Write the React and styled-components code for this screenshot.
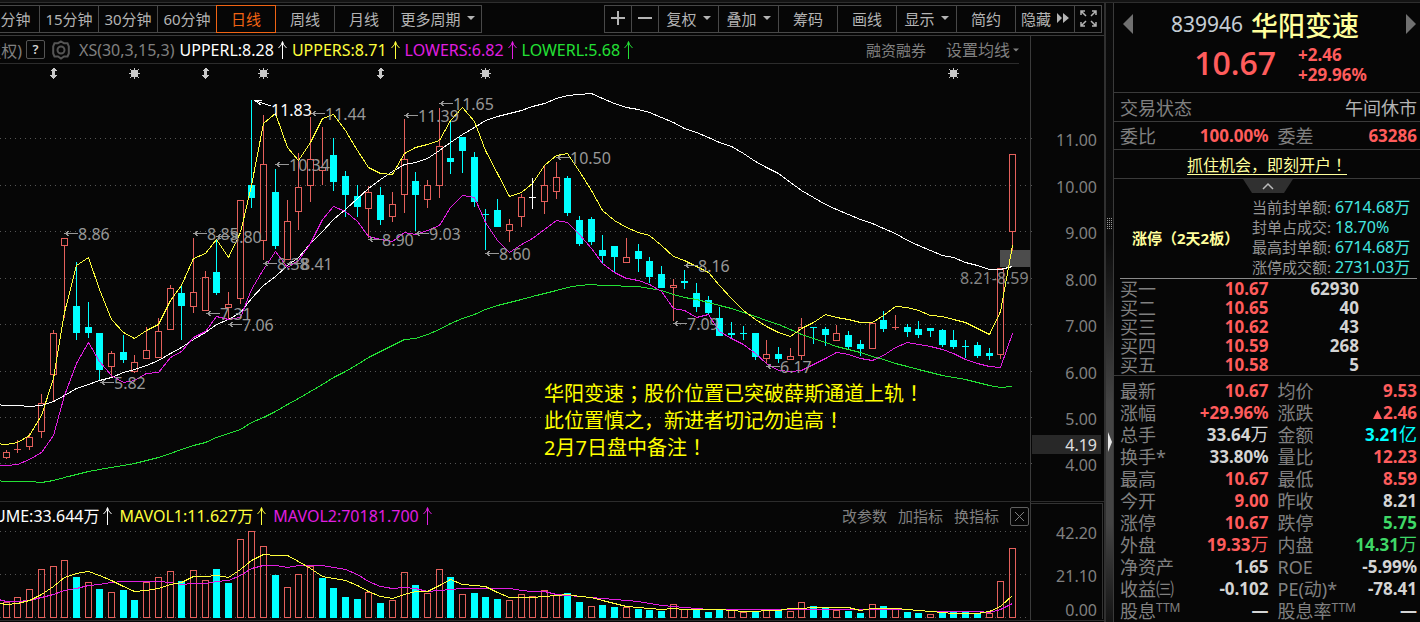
import React from "react";
import styled, { createGlobalStyle } from "styled-components";

const C = {
  bg: "#060606",
  line: "#3a3a3a",
  dim: "#808080",
  text: "#b4b4b4",
  bright: "#d4d4d4",
  red: "#ff5c5c",
  candle: "#e4605c",
  cyan: "#00ffff",
  teal: "#45e6e0",
  green: "#3fd867",
  lime: "#23e035",
  yellow: "#ffff3c",
  pale: "#ffff9c",
  magenta: "#e01ee0",
  orange: "#f06414",
};

const Global = createGlobalStyle`
  * { box-sizing: border-box; }
  body {
    margin: 0;
    background: ${C.bg};
    color: ${C.text};
    font-family: "Noto Sans", "Noto Sans CJK SC", sans-serif;
    font-size: 15px;
    overflow: hidden;
  }
  button {
    font: inherit;
    color: inherit;
    background: none;
    border: 0;
    padding: 0;
    cursor: pointer;
  }
  svg { display: block; flex: none; }
`;

/* ---------- page frame ---------- */
const Page = styled.div`
  border-top: 2px solid #141414;
`;
const Frame = styled.div`
  display: flex;
  border-top: 1px solid #2e2e2e;
`;
const ChartSide = styled.main`
  flex: 1;
  min-width: 0;
`;
const Splitter = styled.div`
  width: 9px;
  border-left: 2px solid #303030;
  display: flex;
  flex-direction: column;
  align-items: center;
  padding-top: 215px;
  gap: 203px;
  background: linear-gradient(#0a0a0a 0, #0c0c0c 240px, #444 400px, #444 520px, #141414 100%);
`;

/* ---------- toolbar ---------- */
const Toolbar = styled.nav`
  display: flex;
  justify-content: space-between;
  height: 33px;
  padding: 2px 2px 0 0;
  border-bottom: 1px solid ${C.line};
`;
const ToolGroup = styled.div`
  display: flex;
`;
const ToolButton = styled.button`
  display: flex;
  align-items: center;
  justify-content: center;
  gap: 6px;
  width: ${(p) => p.$w || 60}px;
  height: 28px;
  white-space: nowrap;
  border: 1px solid ${(p) => (p.$on ? C.orange : "#484848")};
  border-left-width: ${(p) => (p.$cut ? 0 : 1)}px;
  color: ${(p) => (p.$on ? C.orange : C.text)};
  position: relative;
  z-index: ${(p) => (p.$on ? 1 : 0)};
  padding: 0 ${(p) => (p.$cut ? 8 : 0)}px 2px 0;
  & + & { margin-left: -1px; }
`;

const Caret = ({ w = 8 }) => (
  <svg width={w} height="4" viewBox="0 0 8 4" aria-hidden="true">
    <path d="M0 0H8L4 4Z" fill="currentColor" />
  </svg>
);
const Plus = () => (
  <svg width="14" height="14" viewBox="0 0 14 14" stroke="currentColor" strokeWidth="2">
    <path d="M0 7H14M7 0V14" />
  </svg>
);
const Minus = () => (
  <svg width="14" height="14" viewBox="0 0 14 14" stroke="currentColor" strokeWidth="2">
    <path d="M0 7H14" />
  </svg>
);
const FastForward = () => (
  <svg width="12" height="10" viewBox="0 0 12 10" fill="currentColor">
    <path d="M0 0L5 5L0 10ZM6 0L12 5L6 10Z" />
  </svg>
);
const Expand = () => (
  <svg width="17" height="17" viewBox="0 0 17 17" fill="none" stroke="currentColor" strokeWidth="1.5">
    <path d="M1 5V1H5M1 1L6 6M12 1H16V5M16 1L11 6M1 12V16H5M1 16L6 11M12 16H16V12M16 16L11 11" />
  </svg>
);
const UpArrow = () => (
  <svg width="10" height="18" viewBox="0 0 10 18" fill="none" stroke="currentColor">
    <path d="M5.5 18V1M1.5 7Q5 4 5.5 0.5Q6 4 9.5 7" />
  </svg>
);

/* ---------- plot area ---------- */
const PlotRow = styled.section`
  display: flex;
  border-bottom: 1px solid #2c2c2c;
`;
const PlotColumn = styled.div`
  flex: 1;
  min-width: 0;
`;
const AxisColumn = styled.div`
  width: 74px;
  border-left: 1px solid ${C.line};
  padding-top: ${(p) => p.$top}px;
`;
const Indicators = styled.header`
  display: flex;
  align-items: center;
  justify-content: space-between;
  height: 28px;
  margin-right: 11px;
  border-bottom: 1px solid #2c2c2c;
`;
const VolumeHeader = styled(Indicators)`
  margin: 0 1px 0 -6px;
  border-bottom: 0;
`;
const Readings = styled.div`
  display: flex;
  align-items: center;
  white-space: nowrap;
`;
const ClippedName = styled.span`
  display: flex;
  justify-content: flex-end;
  width: 22px;
  overflow: hidden;
  font-size: 16px;
  color: ${C.dim};
`;
const HelpButton = styled.button`
  width: 19px;
  height: 19px;
  margin-left: 4px;
  border: 1px solid #555;
  border-radius: 2px;
  font-size: 13px;
  line-height: 17px;
  font-weight: 600;
  color: ${C.bright};
`;
const GearButton = styled.button`
  margin: 0 9px 0 7px;
  color: #555;
`;
const Reading = styled.span`
  display: flex;
  align-items: center;
  gap: 3px;
  margin-right: ${(p) => p.$gap || 5}px;
  font-size: 16px;
  line-height: 22px;
  color: ${(p) => p.$c};
`;
const Actions = styled.div`
  display: flex;
  align-items: center;
  gap: ${(p) => p.$gap}px;
  color: ${C.dim};
  white-space: nowrap;
`;
const TextButton = styled.button`
  display: flex;
  align-items: center;
  gap: 3px;
  font-size: ${(p) => (p.$large ? 16 : 15)}px;
  line-height: 22px;
`;
const CloseButton = styled.button`
  display: grid;
  place-items: center;
  width: 19px;
  height: 19px;
  border: 1px solid #606060;
  border-radius: 2px;
`;
const Plot = styled.svg`
  width: 100%;
  height: ${(p) => p.$h}px;
  shape-rendering: crispEdges;
`;
const AxisSvg = styled.svg`
  shape-rendering: crispEdges;
`;

/* full-width marks set in the middle of their cell */
const MidTspan = styled.tspan`
  font-family: "Noto Sans CJK TC", sans-serif;
`;
const MidSpan = styled.span`
  font-family: "Noto Sans CJK TC", sans-serif;
`;
const Marks = ({ t, as: Mark = MidSpan }) =>
  t.split(/([；！])/).map((s, i) => (i % 2 ? <Mark key={i}>{s}</Mark> : s));

const STEP = 11.7;
const slot = (i) => Math.floor(6.25 + STEP * i);

/* kind, high, body top, body bottom, low */
const candles = [
  ["r", 450, 452, 457, 458], ["r", 440, 449, 450, 452], ["r", 433, 437, 446, 449], ["r", 394, 403, 431, 437],
  ["r", 330, 333, 374, 401], ["r", 238, 238, 245, 317], ["c", 262, 306, 333, 339], ["c", 302, 327, 333, 337],
  ["c", 333, 333, 370, 379], ["r", 351, 353, 366, 377], ["c", 335, 352, 360, 362], ["r", 355, 362, 371, 372],
  ["r", 327, 350, 358, 358], ["r", 318, 331, 357, 357], ["r", 285, 288, 329, 329], ["c", 284, 293, 306, 339],
  ["r", 238, 292, 306, 312], ["r", 271, 277, 310, 310], ["c", 240, 272, 293, 294], ["r", 292, 304, 307, 319],
  ["r", 200, 200, 298, 303], ["c", 100, 185, 198, 207], ["r", 115, 164, 240, 259], ["c", 169, 192, 246, 248],
  ["r", 200, 221, 259, 259], ["r", 153, 187, 211, 229], ["r", 117, 159, 185, 201], ["r", 127, 167, 170, 184],
  ["c", 138, 155, 182, 190], ["c", 171, 176, 195, 216], ["c", 185, 196, 207, 216], ["r", 186, 192, 208, 237],
  ["c", 187, 195, 220, 224], ["r", 192, 204, 216, 221], ["r", 119, 159, 194, 212], ["c", 172, 181, 195, 230],
  ["r", 180, 185, 199, 207], ["r", 108, 146, 185, 197], ["c", 120, 158, 162, 173], ["c", 137, 137, 151, 172],
  ["c", 152, 157, 202, 206], ["c", 209, 214, 215, 249], ["c", 199, 210, 227, 227], ["r", 219, 224, 230, 241],
  ["r", 194, 197, 216, 226], ["w", 178, 197, 198, 208], ["r", 165, 185, 201, 213], ["r", 162, 177, 191, 198],
  ["c", 176, 178, 213, 215], ["c", 216, 220, 244, 245], ["c", 217, 219, 242, 244], ["c", 235, 250, 256, 263],
  ["c", 246, 246, 257, 272], ["r", 238, 257, 262, 262], ["c", 244, 251, 259, 271], ["c", 257, 261, 277, 282],
  ["c", 266, 274, 288, 288], ["r", 279, 285, 287, 320], ["c", 270, 281, 283, 288], ["c", 283, 293, 307, 311],
  ["c", 296, 300, 313, 314], ["c", 307, 318, 336, 336], ["c", 322, 333, 335, 337], ["c", 326, 333, 334, 339],
  ["c", 333, 333, 357, 359], ["r", 340, 354, 358, 362], ["c", 347, 354, 359, 362], ["r", 348, 356, 359, 359],
  ["r", 318, 327, 355, 359], ["c", 327, 327, 328, 343], ["c", 327, 329, 335, 345], ["r", 325, 333, 340, 340],
  ["c", 331, 335, 347, 348], ["c", 340, 344, 349, 355], ["r", 323, 323, 348, 348], ["c", 311, 320, 329, 331],
  ["r", 315, 327, 328, 329], ["c", 324, 327, 332, 336], ["c", 321, 329, 335, 337], ["c", 328, 328, 331, 336],
  ["c", 329, 330, 345, 346], ["c", 330, 340, 347, 348], ["c", 340, 346, 347, 357], ["c", 342, 345, 356, 357],
  ["c", 348, 353, 356, 359], ["r", 268, 268, 354, 358], ["r", 154, 154, 231, 250],
];

const upperShort = [
  443, 444, 442, 435, 415, 378, 312, 265, 257, 289, 319, 332, 338, 330, 324, 300, 285, 258, 253, 239, 257, 232, 185,
  123, 113, 147, 160, 142, 118, 114, 130, 150, 167, 173, 174, 153, 147, 144, 140, 120, 107, 121, 150, 173, 196, 192,
  183, 165, 155, 153, 171, 190, 210, 220, 227, 232, 235, 245, 256, 260, 266, 272, 285, 298, 310, 319, 326, 332, 336,
  328, 322, 314, 317, 319, 322, 322, 315, 306, 307, 310, 315, 316, 319, 322, 328, 334, 311, 245,
];
const upperLong = [
  404, 405, 405, 406, 405, 401, 395, 388, 384, 380, 377, 372, 369, 365, 360, 353, 347, 339, 332, 324, 319, 312, 298,
  285, 276, 265, 257, 243, 231, 219, 209, 198, 188, 179, 171, 164, 162, 158, 150, 142, 134, 127, 120, 116, 113, 110,
  106, 103, 98, 95, 94, 93, 98, 103, 107, 109, 112, 117, 122, 128, 132, 137, 142, 146, 153, 161, 167, 173, 182, 190,
  197, 204, 209, 214, 219, 223, 228, 233, 240, 245, 250, 255, 257, 262, 265, 269, 269, 266,
];
const lowerShort = [
  465, 465, 464, 459, 452, 435, 395, 363, 342, 361, 375, 382, 380, 373, 372, 357, 351, 337, 331, 316, 319, 317, 289,
  269, 251, 267, 260, 243, 219, 206, 211, 221, 236, 239, 241, 232, 234, 230, 225, 207, 195, 197, 222, 240, 252, 244,
  238, 229, 220, 222, 234, 248, 263, 272, 278, 280, 284, 291, 308, 310, 317, 314, 331, 338, 344, 353, 363, 370, 371,
  370, 364, 358, 352, 354, 358, 360, 355, 347, 342, 344, 346, 349, 353, 359, 363, 366, 367, 333,
];
const lowerLong = [
  480, 481, 481, 481, 482, 480, 477, 474, 471, 469, 467, 465, 463, 460, 457, 453, 449, 445, 442, 437, 433, 429, 422,
  417, 411, 404, 398, 391, 384, 377, 371, 364, 357, 351, 345, 339, 338, 334, 329, 323, 318, 314, 309, 305, 302, 299,
  296, 293, 290, 287, 285, 284, 285, 285, 286, 286, 288, 290, 294, 297, 299, 302, 305, 308, 312, 316, 320, 324, 329,
  334, 338, 342, 346, 349, 352, 356, 359, 363, 366, 369, 372, 375, 377, 379, 382, 385, 387, 386,
];

const volumeTops = [
  602, 597, 589, 569, 566, 560, 577, 582, 589, 592, 590, 600, 582, 577, 571, 581, 570, 580, 569, 583, 539, 531, 546,
  575, 587, 574, 566, 578, 588, 597, 599, 592, 603, 600, 572, 585, 593, 569, 577, 594, 593, 597, 599, 600, 594, 596,
  590, 595, 593, 602, 606, 605, 607, 607, 609, 610, 611, 604, 609, 609, 612, 610, 610, 612, 612, 609, 611, 611, 602,
  606, 608, 610, 611, 613, 604, 606, 609, 612, 613, 614, 613, 612, 612, 613, 613, 581, 548,
];
const volumeKinds =
  "rrrrrrcrcrccrrrcrrccrrrcrrrccccrcrrcrrcrcccrrrrrccrccrcccrrcccrrcrcrrccrccrcrccrccccrrr";
const mavol1 = [
  602, 604, 603, 600, 594, 586, 577, 573, 571, 575, 580, 586, 591, 590, 588, 584, 582, 576, 576, 575, 577, 569, 560,
  554, 555, 555, 561, 568, 576, 578, 580, 585, 591, 596, 598, 594, 591, 591, 585, 579, 584, 585, 586, 592, 597, 597,
  597, 596, 595, 594, 596, 597, 600, 603, 606, 607, 608, 609, 608, 609, 609, 609, 609, 610, 611, 611, 610, 610, 608,
  608, 607, 607, 607, 607, 610, 608, 608, 608, 609, 610, 611, 612, 613, 613, 613, 611, 606, 595,
];
const mavol2 = [
  598, 601, 601, 600, 597, 594, 590, 588, 585, 584, 582, 581, 581, 581, 581, 582, 584, 583, 583, 581, 580, 575, 568,
  565, 565, 567, 565, 565, 565, 567, 569, 574, 581, 586, 588, 587, 588, 591, 590, 589, 588, 588, 588, 588, 588, 590,
  591, 591, 594, 595, 596, 597, 598, 599, 600, 601, 603, 605, 606, 607, 608, 609, 609, 609, 609, 609, 609, 609, 609,
  609, 609, 609, 609, 609, 609, 609, 609, 609, 609, 610, 611, 611, 611, 611, 611, 612, 609, 603,
];

/* each series begins one slot before the visible window */
const Line = ({ ys, color }) => (
  <polyline
    fill="none"
    stroke={color}
    points={ys.map((y, i) => `${slot(i - 1) + 0.5},${y + 0.5}`).join(" ")}
  />
);

const grid = [138, 185, 231, 278, 324, 371, 417, 463];
const Grid = ({ rows, from = 0, to = 1030 }) =>
  rows.map((y) => (
    <line key={y} x1={from} x2={to} y1={y + 0.5} y2={y + 0.5} stroke="#555" strokeDasharray="1 4" />
  ));

const peaks = [
  ["8.86", 64, 233], ["8.85", 193, 233], ["8.80", 216, 236], ["7.31", 206, 313], ["7.06", 228, 324],
  ["5.82", 100, 382], ["10.34", 275, 164], ["8.38", 263, 263], ["8.41", 287, 263], ["11.44", 311, 113],
  ["11.39", 404, 115], ["11.65", 439, 103], ["8.90", 368, 239], ["9.03", 415, 233], ["8.60", 485, 253],
  ["10.50", 556, 157], ["8.16", 684, 265], ["7.09", 673, 323], ["6.17", 766, 366],
];

const Candle = ({ i, d: [kind, hi, top, bottom, low] }) => {
  const x = slot(i);
  const color = { r: C.candle, c: C.cyan, w: "#fff" }[kind];
  const h = bottom - top;
  return (
    <g fill={color}>
      {hi < top && <rect x={x} y={hi} width="1" height={top - hi} />}
      {low > bottom && <rect x={x} y={bottom} width="1" height={low - bottom + 1} />}
      {kind === "r" && h > 1 ? (
        <rect x={x - 2.5} y={top + 0.5} width="6" height={h} fill="none" stroke={color} />
      ) : (
        <rect x={x - 3} y={top} width="7" height={Math.max(h, 1)} />
      )}
    </g>
  );
};

const Star = ({ x }) => (
  <g transform={`translate(${x} 73)`}>
    <rect x="-3" y="-3" width="7" height="7" fill="#c8c8c8" />
    <path
      d="M0.5-5V6M-5 0.5H6M-4-4L5 5M5-4L-4 5"
      fill="none"
      stroke="#c8c8c8"
      strokeWidth="1"
    />
  </g>
);
const Updown = ({ x }) => (
  <path
    transform={`translate(${x} 73)`}
    fill="#c8c8c8"
    d="M0-5H1L4-2H2V2H4L1 6H0L-3 2H-1V-2H-3Z"
  />
);

const note = ["华阳变速；股价位置已突破薛斯通道上轨！", "此位置慎之，新进者切记勿追高！", "2月7日盘中备注！"];

const PriceChart = () => (
  <Plot $h={437} viewBox="0 64 1030 437" preserveAspectRatio="xMaxYMin meet" role="img" aria-label="日线">
    <Grid rows={grid} />
    {[53, 205, 380].map((x) => <Updown key={x} x={x} />)}
    {[134, 263, 485, 953].map((x) => <Star key={x} x={x} />)}
    <rect x="1000" y="250" width="30" height="17" fill="#4c4c4c" />
    {candles.map((d, i) => <Candle key={i} i={i} d={d} />)}
    <Line ys={upperLong} color="#fff" />
    <Line ys={lowerLong} color={C.lime} />
    <Line ys={lowerShort} color={C.magenta} />
    <Line ys={upperShort} color={C.yellow} />
    <g fill="#989898" fontSize="16">
      {peaks.map(([label, x, y]) => (
        <g key={label}>
          <path d={`M${x + 14} ${y + 0.5}H${x + 1}M${x + 5} ${y - 2}L${x + 1} ${y + 0.5}L${x + 5} ${y + 3}`} fill="none" stroke="#989898" />
          <text x={x + 14} y={y + 7}>{label}</text>
        </g>
      ))}
      <text x="960" y="284" fill="#848484">8.21-8.59</text>
    </g>
    <path d="M271 106L256 101M262 100H254L261 105" fill="none" stroke="#fff" />
    <text x="271" y="116" fontSize="16" fill="#fff">11.83</text>
    <g fill="#ffff00" fontSize="20">
      {note.map((t, i) => (
        <text key={t} x="544" y={401 + i * 27}><Marks t={t} as={MidTspan} /></text>
      ))}
    </g>
  </Plot>
);

const VolumeChart = () => (
  <Plot $h={90} viewBox="0 530 1030 90" preserveAspectRatio="xMaxYMin meet" role="img" aria-label="VOLUME">
    <Grid rows={[531, 574, 617]} />
    {volumeTops.map((y, i) => {
      const x = slot(i);
      return volumeKinds[i] === "c" ? (
        <rect key={i} x={x - 3} y={y} width="7" height={618 - y} fill={C.cyan} />
      ) : (
        <rect key={i} x={x - 2.5} y={y + 0.5} width="6" height={617 - y} fill="none" stroke={C.candle} />
      );
    })}
    <Line ys={mavol2} color={C.magenta} />
    <Line ys={mavol1} color={C.yellow} />
  </Plot>
);

const PriceAxis = () => (
  <AxisSvg width="73" height="437" viewBox="1031 64 73 437">
    <rect x="1032" y="435" width="69" height="19" rx="1" fill="#282828" />
    <Grid rows={grid} from={1031} to={1034} />
    <g fill={C.dim} fontSize="16" textAnchor="end">
      {grid.map((y, i) => (
        <text key={y} x="1097" y={y + 8}>{(11 - i).toFixed(2)}</text>
      ))}
      <text x="1097" y="451" fill="#e0e0e0">4.19</text>
    </g>
  </AxisSvg>
);

const VolumeAxis = () => (
  <AxisSvg width="73" height="118" viewBox="1031 502 73 118">
    <path d="M1031 503H1102.5V619" fill="none" stroke="#333" />
    <g fill={C.dim} fontSize="16" textAnchor="end">
      <text x="1097" y="539">42.20</text>
      <text x="1097" y="582">21.10</text>
      <text x="1097" y="616">0.00</text>
    </g>
  </AxisSvg>
);

/* ---------- quote panel ---------- */
const QuotePanel = styled.aside`
  width: 307px;
  border-left: 1px solid ${C.line};
  white-space: nowrap;
`;
const QuoteHead = styled.header`
  display: flex;
  align-items: flex-start;
  justify-content: space-between;
  height: 90px;
  padding: 11px 4px 0 9px;
  border-bottom: 1px solid ${C.line};
  color: #707070;
`;
const QuoteCore = styled.div`
  display: flex;
  flex-direction: column;
  align-items: center;
  margin: -6px 9px 0 0;
`;
const StockTitle = styled.h1`
  display: flex;
  align-items: center;
  gap: 8px;
  height: 32px;
  margin: 0;
  font-size: 27px;
  font-weight: 500;
  color: ${C.pale};
`;
const Code = styled.span`
  font-size: 21px;
  font-weight: 400;
  color: #c4ccd4;
`;
const PriceLine = styled.div`
  display: flex;
  align-items: center;
  gap: 22px;
  height: 44px;
  padding-left: 31px;
  color: ${C.red};
`;
const Price = styled.strong`
  font: 600 32px "Open Sans", "Noto Sans", sans-serif;
`;
const Change = styled.div`
  font-size: 17px;
  font-weight: 700;
  line-height: 20px;
  padding-top: 6px;
`;
const StatusRow = styled.div`
  display: flex;
  align-items: center;
  justify-content: space-between;
  height: 29px;
  padding: 0 3px 0 6px;
  border-bottom: 1px solid ${C.line};
  font-size: 18px;
  color: ${C.dim};
`;
const StatusValue = styled.span`
  color: ${C.text};
`;
const PromoRow = styled.div`
  height: 29px;
  border-bottom: 1px solid ${C.line};
  text-align: center;
  line-height: 28px;
  font-size: 16px;
`;
const PromoLink = styled.a`
  color: ${C.pale};
  text-underline-offset: 3px;
`;
const FoldButton = styled.button`
  display: block;
  margin: 0 0 0 129px;
`;
const LimitBox = styled.section`
  display: flex;
  align-items: center;
  justify-content: space-between;
  margin: 0 3px 0 6px;
  padding: 4px 9px 1px 12px;
  border-bottom: 1px solid #8a8a8a;
`;
const LimitTitle = styled.strong`
  font-size: 15px;
  font-weight: 700;
  color: ${C.pale};
`;
const LimitList = styled.dl`
  display: grid;
  grid-template-columns: auto 73px;
  column-gap: 4px;
  margin: 0;
  line-height: 20px;
  color: #949494;
`;
const LimitValue = styled.dd`
  margin: 0;
  font-size: 16px;
  height: 20px;
  color: ${C.teal};
`;
const DataTable = styled.table`
  width: calc(100% - 9px);
  margin: ${(p) => p.$top || 0}px 3px 0 6px;
  border-collapse: collapse;
  table-layout: fixed;
  font-size: 17px;
`;
const Row = styled.tr`
  height: ${(p) => p.$h}px;
  line-height: 18px;
`;
const Label = styled.th`
  padding: 0 0 0 ${(p) => p.$pad || 0}px;
  text-align: left;
  font-size: 18px;
  font-weight: 400;
  color: ${C.dim};
  & sup { font-size: 12px; line-height: 0; vertical-align: 6px; }
`;
const Value = styled.td`
  padding: 0 ${(p) => p.$pad || 0}px 0 0;
  text-align: right;
  font-weight: 700;
  color: ${(p) => p.$c || C.bright};
`;
const Unit = styled.span`
  font-weight: 400;
  font-size: 18px;
  line-height: 0;
`;
const Divider = styled.hr`
  height: 1px;
  margin: ${(p) => p.$top || 0}px 0 0;
  border: 0;
  background: ${C.line};
`;

const limits = [
  ["当前封单额:", "6714.68万"],
  ["封单占成交:", "18.70%"],
  ["最高封单额:", "6714.68万"],
  ["涨停成交额:", "2731.03万"],
];
const bids = [
  ["买一", "10.67", "62930"],
  ["买二", "10.65", "40"],
  ["买三", "10.62", "43"],
  ["买四", "10.59", "268"],
  ["买五", "10.58", "5"],
];
const ttm = <sup>TTM</sup>;
const stats = [
  ["最新", "10.67", C.red, "均价", "9.53", C.red],
  ["涨幅", "+29.96%", C.red, "涨跌", "▲2.46", C.red],
  ["总手", "33.64万", C.bright, "金额", "3.21亿", C.cyan],
  ["换手*", "33.80%", C.bright, "量比", "12.23", C.red],
  ["最高", "10.67", C.red, "最低", "8.59", C.red],
  ["今开", "9.00", C.red, "昨收", "8.21", C.bright],
  ["涨停", "10.67", C.red, "跌停", "5.75", C.green],
  ["外盘", "19.33万", C.red, "内盘", "14.31万", C.green],
  ["净资产", "1.65", C.bright, "ROE", "-5.99%", C.bright],
  ["收益㈢", "-0.102", C.bright, "PE(动)*", "-78.41", C.bright],
  [<>股息{ttm}</>, "—", C.bright, <>股息率{ttm}</>, "—", C.bright],
];
const InlineTriangle = styled.svg`
  display: inline;
  margin-right: 1px;
`;
const Amount = ({ v }) => {
  if (v[0] === "▲")
    return (
      <>
        <InlineTriangle width="9" height="9" viewBox="0 0 9 9" aria-label="▲">
          <path d="M4.5 0L9 9H0Z" fill="currentColor" />
        </InlineTriangle>
        {v.slice(1)}
      </>
    );
  if (/[万亿]$/.test(v)) return <>{v.slice(0, -1)}<Unit>{v.slice(-1)}</Unit></>;
  return v;
};

export default function App() {
  return (
    <Page>
      <Global />
      <Frame>
        <ChartSide>
          <Toolbar>
            <ToolGroup>
              <ToolButton $w={40} $cut>分钟</ToolButton>
              <ToolButton>15分钟</ToolButton>
              <ToolButton>30分钟</ToolButton>
              <ToolButton>60分钟</ToolButton>
              <ToolButton $on>日线</ToolButton>
              <ToolButton>周线</ToolButton>
              <ToolButton>月线</ToolButton>
              <ToolButton $w={89}>更多周期<Caret /></ToolButton>
            </ToolGroup>
            <ToolGroup>
              <ToolButton $w={28} aria-label="放大"><Plus /></ToolButton>
              <ToolButton $w={28} aria-label="缩小"><Minus /></ToolButton>
              <ToolButton $w={61}>复权<Caret /></ToolButton>
              <ToolButton $w={61}>叠加<Caret /></ToolButton>
              <ToolButton>筹码</ToolButton>
              <ToolButton>画线</ToolButton>
              <ToolButton $w={61}>显示<Caret /></ToolButton>
              <ToolButton>简约</ToolButton>
              <ToolButton>隐藏<FastForward /></ToolButton>
              <ToolButton $w={28} aria-label="全屏"><Expand /></ToolButton>
            </ToolGroup>
          </Toolbar>

          <PlotRow>
            <PlotColumn>
              <Indicators>
                <Readings>
                  <ClippedName>复权)</ClippedName>
                  <HelpButton>?</HelpButton>
                  <GearButton aria-label="设置">
                    <svg width="18" height="20" viewBox="0 0 18 20" fill="none" stroke="currentColor" strokeWidth="2">
                      <path d="M9 1.5L12 3.2H15.5L16.8 6.5V13.5L15.5 16.5H12L9 18.5L6 16.5H2.5L1.2 13.5V6.5L2.5 3.2H6Z" />
                      <circle cx="9" cy="10" r="3.5" />
                    </svg>
                  </GearButton>
                  <Reading $c={C.dim}>XS(30,3,15,3)</Reading>
                  <Reading $c="#fff">UPPERL:8.28<UpArrow /></Reading>
                  <Reading $c={C.yellow}>UPPERS:8.71<UpArrow /></Reading>
                  <Reading $c={C.magenta}>LOWERS:6.82<UpArrow /></Reading>
                  <Reading $c={C.lime}>LOWERL:5.68<UpArrow /></Reading>
                </Readings>
                <Actions $gap={20}>
                  <TextButton>融资融券</TextButton>
                  <TextButton $large>设置均线<Caret w={6} /></TextButton>
                </Actions>
              </Indicators>
              <PriceChart />
            </PlotColumn>
            <AxisColumn $top={28}><PriceAxis /></AxisColumn>
          </PlotRow>

          <PlotRow>
            <PlotColumn>
              <VolumeHeader>
                <Readings>
                  <Reading $c="#fff" $gap={7}>UME:33.644万<UpArrow /></Reading>
                  <Reading $c={C.yellow} $gap={7}>MAVOL1:11.627万<UpArrow /></Reading>
                  <Reading $c={C.magenta} $gap={7}>MAVOL2:70181.700<UpArrow /></Reading>
                </Readings>
                <Actions $gap={11}>
                  <TextButton>改参数</TextButton>
                  <TextButton>加指标</TextButton>
                  <TextButton>换指标</TextButton>
                  <CloseButton aria-label="关闭">
                    <svg width="11" height="11" viewBox="0 0 11 11" stroke="currentColor">
                      <path d="M1 1L10 10M10 1L1 10" />
                    </svg>
                  </CloseButton>
                </Actions>
              </VolumeHeader>
              <VolumeChart />
            </PlotColumn>
            <AxisColumn $top={0}><VolumeAxis /></AxisColumn>
          </PlotRow>
        </ChartSide>

        <Splitter>
          <svg width="6" height="11" viewBox="0 0 6 11" stroke="#999" strokeDasharray="1 1">
            <path d="M0.5 0V11M2.5 0V11M4.5 0V11" />
          </svg>
          <svg width="5" height="20" viewBox="0 0 5 20" fill="#e8e8e8">
            <path d="M1 0L5 10L1 20Z" />
          </svg>
        </Splitter>

        <QuotePanel>
          <QuoteHead>
            <button aria-label="上一只">
              <svg width="10" height="20" viewBox="0 0 10 20"><path d="M10 0V20L0 10Z" fill="currentColor" /></svg>
            </button>
            <QuoteCore>
              <StockTitle><Code>839946</Code>华阳变速</StockTitle>
              <PriceLine>
                <Price>10.67</Price>
                <Change>+2.46<br />+29.96%</Change>
              </PriceLine>
            </QuoteCore>
            <button aria-label="下一只">
              <svg width="10" height="20" viewBox="0 0 10 20"><path d="M0 0V20L10 10Z" fill="currentColor" /></svg>
            </button>
          </QuoteHead>
          <StatusRow>交易状态<StatusValue>午间休市</StatusValue></StatusRow>
          <DataTable>
            <tbody>
              <Row $h={27}>
                <Label>委比</Label><Value $c={C.red}>100.00%</Value>
                <Label $pad={9}>委差</Label><Value $c={C.red}>63286</Value>
              </Row>
            </tbody>
          </DataTable>
          <Divider />
          <PromoRow><PromoLink href="#open"><Marks t="抓住机会，即刻开户！" /></PromoLink></PromoRow>
          <FoldButton aria-label="收起">
            <svg width="50" height="14" viewBox="0 0 50 14">
              <path d="M0 0H50L41 14H9Z" fill="#303030" />
              <path d="M20 10L25 5L30 10" fill="none" stroke="#bbb" strokeWidth="1.5" />
            </svg>
          </FoldButton>
          <LimitBox>
            <LimitTitle>涨停（2天2板）</LimitTitle>
            <LimitList>
              {limits.map(([k, v]) => (
                <React.Fragment key={k}><dt>{k}</dt><LimitValue>{v}</LimitValue></React.Fragment>
              ))}
            </LimitList>
          </LimitBox>
          <DataTable>
            <tbody>
              {bids.map(([k, p, n]) => (
                <Row key={k} $h={19}>
                  <Label>{k}</Label>
                  <Value $c={C.red}>{p}</Value>
                  <Value colSpan={2} $pad={58}>{n}</Value>
                </Row>
              ))}
            </tbody>
          </DataTable>
          <Divider $top={1} />
          <DataTable $top={4}>
            <tbody>
              {stats.map(([k, v, c, k2, v2, c2], i) => (
                <Row key={i} $h={22}>
                  <Label>{k}</Label><Value $c={c}><Amount v={v} /></Value>
                  <Label $pad={9}>{k2}</Label><Value $c={c2}><Amount v={v2} /></Value>
                </Row>
              ))}
            </tbody>
          </DataTable>
        </QuotePanel>
      </Frame>
    </Page>
  );
}
